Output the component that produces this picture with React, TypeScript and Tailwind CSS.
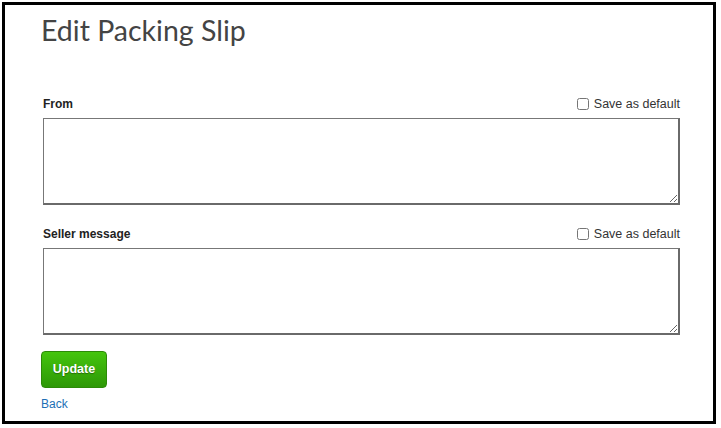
import React from "react";

const sans = { fontFamily: '"Liberation Sans", Arial, sans-serif' };

function Field({ label }: { label: string }) {
  return (
    <div className="ml-[2px] w-[637px]">
      <div className="flex h-[16px] items-center justify-between">
        <span className="text-[12px] font-bold leading-[16px] text-[#222]">{label}</span>
        <label className="flex items-center gap-[5px] text-[12.5px] leading-[16px] text-[#333]">
          <input type="checkbox" className="m-0 h-[12px] w-[12px] accent-[#888]" />
          <span>Save as default</span>
        </label>
      </div>
      <textarea
        className="mt-[6px] block h-[87px] w-[637px] resize border-t border-l border-r-2 border-b-2 border-t-[#777] border-l-[#777] border-r-[#6a6a6a] border-b-[#6a6a6a] bg-white p-1 outline-none"
      />
    </div>
  );
}

export default function App() {
  return (
    <div className="h-[428px] w-[721px] bg-white p-[2px]" style={sans}>
      <div className="flex h-[422px] w-[714px] flex-col border-[3px] border-black pl-[36px] pt-[8px]">
        <h1
          className="text-[28.5px] leading-[34px] font-normal text-[#444]"
          style={{ fontFamily: "Lato, sans-serif" }}
        >
          Edit Packing Slip
        </h1>
        <div className="mt-[49px]">
          <Field label="From" />
        </div>
        <div className="mt-[21px]">
          <Field label="Seller message" />
        </div>
        <button className="mt-[16px] h-[37px] w-[66px] rounded-[4px] border border-[#2c8a08] bg-gradient-to-b from-[#44c50d] to-[#2e9807] text-[12.5px] font-bold text-white [text-shadow:0_1px_1px_rgba(0,0,0,0.35)]">
          Update
        </button>
        <a href="#" className="mt-[8px] text-[12px] leading-[16px] text-[#1d6fb5]">
          Back
        </a>
      </div>
    </div>
  );
}
